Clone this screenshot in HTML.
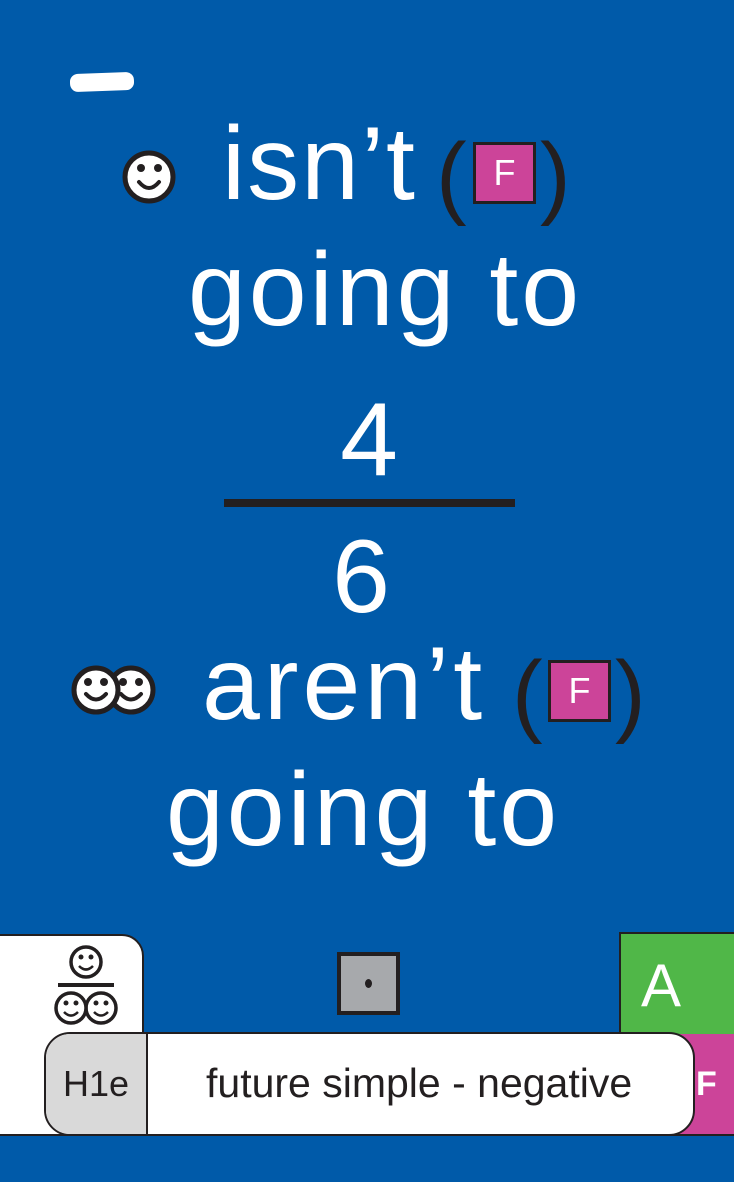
<!DOCTYPE html>
<html><head><meta charset="utf-8"><style>
body{margin:0;width:734px;height:1182px;background:#005aa9;position:relative;overflow:hidden;font-family:"Liberation Sans",sans-serif}
.a{position:absolute}
.w{color:#fff;font-size:104px;line-height:1;white-space:nowrap}
.par{color:#231f20;font-size:92px;line-height:1}
.fb{position:absolute;background:#cc4499;border:3px solid #231f20;color:#fff;font-size:36px;text-align:center;box-sizing:border-box}
</style></head><body>
<div class="a" style="left:70px;top:73px;width:64px;height:18px;background:#fff;border-radius:8px;transform:rotate(-2deg)"></div>
<svg class="a" style="left:0;top:0" width="734" height="1182">
<g fill="#fff" stroke="#231f20" stroke-width="5">
<circle cx="149" cy="177" r="24"/>
<circle cx="131" cy="690" r="22"/><circle cx="96" cy="690" r="22"/>
</g>
<g fill="#231f20"><circle cx="141" cy="168" r="4"/><circle cx="158" cy="168" r="4"/>
<circle cx="88" cy="682" r="4"/><circle cx="104" cy="682" r="4"/><circle cx="123" cy="682" r="4"/><circle cx="139" cy="682" r="4"/></g>
<g fill="none" stroke="#231f20" stroke-width="4" stroke-linecap="round">
<path d="M139 182 Q149 194 159 182"/><path d="M86 694 Q96 705 106 694"/><path d="M121 694 Q131 705 141 694"/></g>
<rect x="224" y="499" width="291" height="8" fill="#231f20"/>
</svg>
<div class="a w" style="left:222px;top:112px;letter-spacing:2px">isn’t</div>
<div class="a par" style="left:436px;top:130px">(</div>
<div class="fb" style="left:473px;top:142px;width:63px;height:62px;line-height:56px">F</div>
<div class="a par" style="left:540px;top:130px">)</div>
<div class="a w" style="left:175px;top:238px;width:420px;text-align:center;letter-spacing:3px">going to</div>
<div class="a w" style="left:319px;top:388px;width:100px;text-align:center">4</div>
<div class="a w" style="left:311px;top:525px;width:100px;text-align:center">6</div>
<div class="a w" style="left:202px;top:632px;letter-spacing:4px">aren’t</div>
<div class="a par" style="left:512px;top:648px">(</div>
<div class="fb" style="left:548px;top:660px;width:63px;height:62px;line-height:56px">F</div>
<div class="a par" style="left:615px;top:648px">)</div>
<div class="a w" style="left:153px;top:758px;width:420px;text-align:center;letter-spacing:3px">going to</div>

<div class="a" style="left:-2px;top:934px;width:146px;height:202px;background:#fff;border:2px solid #231f20;border-radius:0 22px 0 0;box-sizing:border-box"></div>
<svg class="a" style="left:48px;top:944px" width="76" height="86">
<g fill="#fff" stroke="#231f20" stroke-width="3.5"><circle cx="38" cy="18" r="15"/><circle cx="53" cy="64" r="15"/><circle cx="23" cy="64" r="15"/></g>
<rect x="10" y="39" width="56" height="4" fill="#231f20"/>
<g fill="#231f20"><circle cx="33" cy="13" r="2.5"/><circle cx="43" cy="13" r="2.5"/><circle cx="18" cy="59" r="2.5"/><circle cx="28" cy="59" r="2.5"/><circle cx="48" cy="59" r="2.5"/><circle cx="58" cy="59" r="2.5"/></g>
<g fill="none" stroke="#231f20" stroke-width="2.5"><path d="M31 22 Q38 29 45 22"/><path d="M16 68 Q23 75 30 68"/><path d="M46 68 Q53 75 60 68"/></g>
</svg>
<div class="a" style="left:337px;top:952px;width:63px;height:63px;background:#a7a9ac;border:4px solid #231f20;box-sizing:border-box"></div>
<div class="a" style="left:365px;top:979px;width:7px;height:9px;border-radius:50%;background:#231f20"></div>
<div class="a" style="left:619px;top:932px;width:120px;height:104px;background:#50b748;border:2px solid #231f20;box-sizing:border-box;color:#fff;font-size:60px;line-height:104px;padding-left:20px">A</div>
<div class="a" style="left:600px;top:1034px;width:140px;height:102px;background:#cc4499;border-bottom:2px solid #231f20;box-sizing:border-box;color:#fff;font-size:34px;line-height:100px;padding-left:96px;font-weight:bold">F</div>
<div class="a" style="left:44px;top:1032px;width:651px;height:104px;background:#fff;border:2px solid #231f20;border-radius:26px;box-sizing:border-box;overflow:hidden">
<div class="a" style="left:0;top:0;width:100px;height:100px;background:#d9d9d9;border-right:2px solid #231f20;color:#231f20;font-size:36px;line-height:100px;text-align:center">H1e</div>
<div class="a" style="left:160px;top:0;height:100px;line-height:98px;color:#231f20;font-size:41px;white-space:nowrap">future simple - negative</div>
</div>
</body></html>
